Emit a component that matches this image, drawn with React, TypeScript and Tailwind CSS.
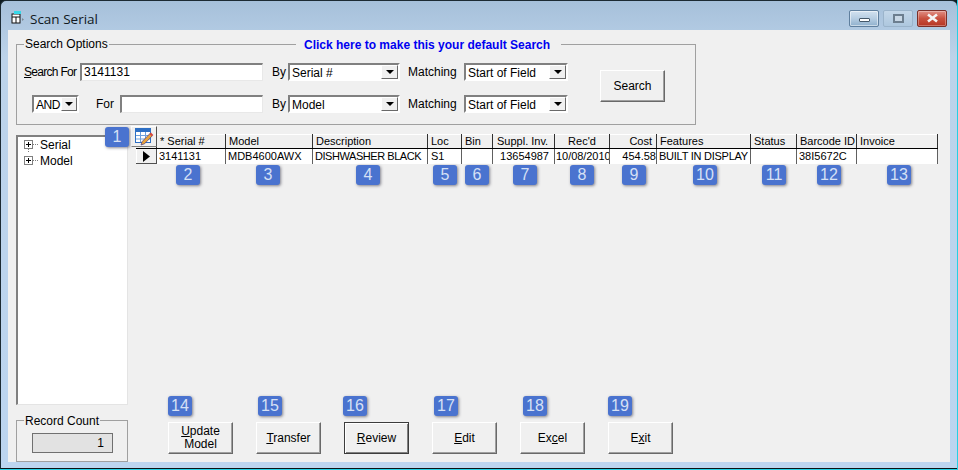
const ui = "[font-family:'Liberation_Sans',Arial,sans-serif]";

function Badge({ n, className }: { n: number; className: string }) {
  return (
    <div className={`absolute z-20 h-5 w-6 rounded-[3px] bg-[#4a73cf] text-center text-[16px] leading-5 text-[#d6e0f5] shadow-[1px_1px_3px_rgba(40,40,60,0.55)] ${className}`}>
      {n}
    </div>
  );
}

function Arrow({ narrow }: { narrow?: boolean }) {
  return (
    <div className={`flex h-full ${narrow ? "w-[16px]" : "w-[17px]"} shrink-0 items-center justify-center border border-t-white border-l-white border-r-[#696969] border-b-[#696969] bg-[#f0f0f0]`}>
      <svg width="8" height="4" viewBox="0 0 8 4"><path d="M0 0h8L4 4z" fill="#000" /></svg>
    </div>
  );
}

function Select({ value, className, narrow }: { value: string; className: string; narrow?: boolean }) {
  return (
    <div className={`flex h-[18px] items-center border-2 border-t-[#808080] border-l-[#808080] border-r-white border-b-white bg-white text-[12px] text-black ${className}`}>
      <span className={`min-w-0 flex-1 whitespace-nowrap pl-[2px] pt-[1px] ${narrow ? "tracking-[-0.5px]" : ""}`}>{value}</span>
      <Arrow narrow={narrow} />
    </div>
  );
}

function Input({ value, className }: { value?: string; className: string }) {
  return (
    <div className={`h-[18px] border-t-2 border-l-2 border-t-[#808080] border-l-[#808080] border-r border-b border-r-[#e8e8e8] border-b-[#e8e8e8] bg-white pl-[2px] text-[12px] leading-[15px] text-black ${className}`}>
      {value}
    </div>
  );
}

function Btn({ children, isDefault, className }: { children: React.ReactNode; isDefault?: boolean; className: string }) {
  return (
    <div className={`flex h-8 w-[65px] shrink-0 flex-col items-center justify-center text-[12px] leading-[13px] text-black ${isDefault ? "border border-[#3c3c3c] shadow-[inset_1px_1px_0_#fff,inset_-1px_-1px_0_#808080]" : "border border-t-white border-l-white border-r-[#696969] border-b-[#696969] shadow-[inset_-1px_-1px_0_#a0a0a0]"} ${className}`}>
      {children}
    </div>
  );
}

const cols = [
  { w: "w-[69px]", head: "* Serial #", val: "3141131", hc: "pl-[3px]", dc: "pl-[2px]" },
  { w: "w-[87px]", head: "Model", val: "MDB4600AWX", hc: "pl-[3px]", dc: "pl-[2px]" },
  { w: "w-[115px]", head: "Description", val: "DISHWASHER BLACK", hc: "pl-[3px]", dc: "pl-[2px] tracking-[-0.45px]" },
  { w: "w-[34px]", head: "Loc", val: "S1", hc: "pl-[3px]", dc: "pl-[3px]" },
  { w: "w-[31px]", head: "Bin", val: "", hc: "pl-[3px]", dc: "" },
  { w: "w-[62px]", head: "Suppl. Inv.", val: "13654987", hc: "pl-[4px]", dc: "pr-[5px] text-right" },
  { w: "w-[55px]", head: "Rec'd", val: "10/08/2010", hc: "text-center", dc: "pl-[1px] tracking-[-0.05px]" },
  { w: "w-[47px]", head: "Cost", val: "454.58", hc: "pr-[4px] text-right", dc: "text-right" },
  { w: "w-[94px]", head: "Features", val: "BUILT IN DISPLAY", hc: "pl-[3px]", dc: "pl-[2px] tracking-[-0.25px]" },
  { w: "w-[46px]", head: "Status", val: "", hc: "pl-[3px]", dc: "" },
  { w: "w-[60px]", head: "Barcode ID", val: "38I5672C", hc: "pl-[3px]", dc: "pl-[2px]" },
  { w: "w-[81px]", head: "Invoice", val: "", hc: "pl-[3px]", dc: "" },
];

const colBadges = [
  { n: 2, c: "left-[45px]" }, { n: 3, c: "left-[125px]" }, { n: 4, c: "left-[225px]" },
  { n: 5, c: "left-[302px]" }, { n: 6, c: "left-[334px]" }, { n: 7, c: "left-[382px]" },
  { n: 8, c: "left-[439px]" }, { n: 9, c: "left-[491px]" }, { n: 10, c: "left-[562px]" },
  { n: 11, c: "left-[631px]" }, { n: 12, c: "left-[686px]" }, { n: 13, c: "left-[756px]" },
];

function TreeItem({ label, last }: { label: string; last?: boolean }) {
  return (
    <div className="relative flex h-4 items-center text-[12px] text-black">
      <svg width="24" height="16" viewBox="0 0 24 16" className="shrink-0">
        <rect x="0.5" y="3.5" width="8" height="8" fill="#fff" stroke="#808080" />
        <path d="M2 7.5h5M4.5 5v5" stroke="#000" />
        <path d="M9 7.5h5" stroke="#808080" strokeDasharray="1 1" />
        {!last && <path d="M4.5 12v4" stroke="#808080" strokeDasharray="1 1" />}
      </svg>
      <span className="-ml-[8px]">{label}</span>
    </div>
  );
}

export default function App() {
  return (
    <div className={`${ui} h-[470px] w-[958px] overflow-hidden border-r border-b border-[#25d0e4] bg-[#0d1a20]`}>
      <div className="flex h-[469px] flex-col rounded-t-[6px] border-t border-l border-b border-[#1c2a33] border-b-[#0b1216] bg-gradient-to-b from-[#a6c0da] via-[#bcd3ea] via-[12%] to-[#bcd5f0]">
        {/* title bar */}
        <div className="flex h-[29px] shrink-0 items-center pl-[10px] pr-[10px]">
          <svg width="16" height="14" viewBox="0 0 16 14" className="mr-[3px] mt-[3px] shrink-0">
            <rect x="1" y="4" width="8" height="9" fill="#fff" stroke="#111" />
            <path d="M1 7h8M5 7v6" stroke="#111" />
            <rect x="3" y="1" width="7" height="3" fill="#36d8e8" />
            <path d="M11 8l2 1.500-2 1.500z" fill="#7d8a96" />
          </svg>
          <span className="mt-[7px] text-[13.5px] text-[#101820] [font-family:'Open_Sans',sans-serif]">Scan Serial</span>
          <div className="ml-auto mt-[5px] flex items-center gap-[4px]">
            <div className="flex h-[17px] w-[30px] items-center justify-center rounded-[2px] border border-[#5f7f9e] bg-gradient-to-b from-[#d3e2f0] via-[#b6cde2] to-[#8fb0cd] shadow-[inset_0_0_0_1px_rgba(255,255,255,0.5)]">
              <div className="mt-[3px] h-[4px] w-[11px] rounded-[1px] border border-[#44586a] bg-white" />
            </div>
            <div className="flex h-[17px] w-[30px] items-center justify-center rounded-[2px] border border-[#9bb4cb] bg-gradient-to-b from-[#c4d7e9] to-[#adc7de]">
              <div className="h-[9px] w-[11px] border-2 border-[#6c7e8f] bg-[#c9d8e6]" />
            </div>
            <div className="flex h-[17px] w-[30px] items-center justify-center rounded-[2px] border border-[#7c2f28] bg-gradient-to-b from-[#e08f85] via-[#c9513f] to-[#b53524] shadow-[inset_0_0_0_1px_rgba(255,255,255,0.3)]">
              <svg width="13" height="10" viewBox="0 0 13 10"><path d="M2 1.500l9 7M11 1.500l-9 7" stroke="#f4f4f4" strokeWidth="2.600" /></svg>
            </div>
          </div>
        </div>

        {/* client area */}
        <div className="ml-[7px] mr-[7px] mb-[6px] flex flex-1 flex-col bg-[#f0f0f0] pl-2 pt-[14px]">
          {/* Search options group */}
          <div className="relative h-[81px] w-[680px] shrink-0 border border-[#a0a0a0] pl-[7px] pt-[18px] text-[12px] text-black">
            <span className="absolute -top-[8px] left-[7px] bg-[#f0f0f0] px-[1px] leading-[14px]">Search Options</span>
            <span className="absolute -top-[7px] left-[279px] bg-[#f0f0f0] pl-[8px] pr-[11px] text-[12px] font-bold leading-[14px] text-[#0000f0]">Click here to make this your default Search</span>

            <div className="flex h-[18px] items-center">
              <span className="w-[56px] shrink-0 whitespace-nowrap tracking-[-0.7px]"><u>S</u>earch For</span>
              <Input value="3141131" className="w-[183px]" />
              <span className="w-[25px] shrink-0 pl-[9px]">By</span>
              <Select value="Serial #" className="w-[112px]" />
              <span className="ml-[8px] w-[56px] shrink-0">Matching</span>
              <Select value="Start of Field" className="w-[104px]" />
            </div>
            <div className="mt-[14px] flex h-[18px] items-center">
              <Select value="AND" narrow className="ml-[8px] w-[47px]" />
              <span className="ml-[17px] w-[24px] shrink-0">For</span>
              <Input className="w-[143px]" />
              <span className="w-[25px] shrink-0 pl-[9px]">By</span>
              <Select value="Model" className="w-[112px]" />
              <span className="ml-[8px] w-[56px] shrink-0">Matching</span>
              <Select value="Start of Field" className="w-[104px]" />
            </div>
            <Btn className="absolute left-[583px] top-[25px]">Search</Btn>
          </div>

          {/* main */}
          <div className="mt-[2px] flex flex-1">
            {/* left */}
            <div className="flex w-[112px] shrink-0 flex-col pt-2">
              <div className="h-[270px] border-t-2 border-l-2 border-t-[#808080] border-l-[#808080] border-r border-b border-r-[#e4e4e4] border-b-[#e4e4e4] bg-white pl-[6px]">
                <TreeItem label="Serial" />
                <TreeItem label="Model" last />
              </div>
              <div className="relative mt-[15px] h-[42px] border border-[#a0a0a0] pl-[15px] pt-[12px]">
                <span className="absolute -top-[7px] left-[7px] bg-[#f0f0f0] px-[1px] text-[12px] leading-[14px] text-black">Record Count</span>
                <div className="h-[20px] w-[81px] border border-[#707070] bg-[#e2e2e2] pr-[8px] text-right text-[12px] leading-[18px] text-black">1</div>
              </div>
            </div>

            {/* right */}
            <div className="relative ml-[3px] flex flex-1 flex-col pt-[7px]">
              <div className="absolute -top-[1px] left-0 z-10 flex h-[21px] w-[26px] items-center justify-center border border-t-white border-l-white border-r-[#505050] border-b-[#808080] bg-[#f0f0f0]">
                <svg width="19" height="18" viewBox="0 0 19 18">
                  <rect x="0.500" y="0.500" width="15" height="14" fill="#fff" stroke="#2d6fc4" />
                  <rect x="1" y="1" width="14" height="3" fill="#2d6fc4" />
                  <path d="M1 7.500h14M1 11h14M5.500 4v10M10.500 4v10" stroke="#6ea0dc" />
                  <path d="M6 17l1.200-3.500L15 5.500l2.300 2.300L9.500 15.800z" fill="#e8a33c" stroke="#4a3a78" strokeWidth="0.700" />
                  <path d="M14.500 6l2.300 2.300L18.300 7 16 4.500z" fill="#d8433c" />
                </svg>
              </div>

              <div className="relative ml-[5px] text-[11px] text-black">
                <div className="flex h-[15px] w-[802px] border-b border-black bg-[#f0f0f0] shadow-[inset_0_1px_0_#fff]">
                  <div className="w-[21px] shrink-0 border-r border-[#303030]" />
                  {cols.map((c) => (
                    <div key={c.head} className={`${c.w} ${c.hc} shrink-0 truncate border-r border-[#303030] leading-[15px]`}>{c.head}</div>
                  ))}
                </div>
                <div className="flex h-[15px] w-[802px] bg-white">
                  <div className="flex w-[21px] shrink-0 items-center justify-center border-r border-b border-[#505050] bg-[#f0f0f0] shadow-[inset_1px_0_0_#fff]">
                    <svg width="7" height="11" viewBox="0 0 7 11"><path d="M0 0l7 5.500L0 11z" fill="#000" /></svg>
                  </div>
                  {cols.map((c) => (
                    <div key={c.head} className={`${c.w} ${c.dc} shrink-0 overflow-hidden whitespace-nowrap border-r border-[#606060] leading-[14px]`}>{c.val}</div>
                  ))}
                </div>
              </div>

              <div className="mb-2 ml-[37px] mt-auto flex gap-[23px]">
                <Btn className=""><span><u>U</u>pdate</span><span>Model</span></Btn>
                <Btn className=""><span><u>T</u>ransfer</span></Btn>
                <Btn className="" isDefault><span><u>R</u>eview</span></Btn>
                <Btn className=""><span><u>E</u>dit</span></Btn>
                <Btn className=""><span>Ex<u>c</u>el</span></Btn>
                <Btn className=""><span>E<u>x</u>it</span></Btn>
              </div>

              <Badge n={1} className="-left-[26px] top-0" />
              {colBadges.map((b) => (
                <Badge key={b.n} n={b.n} className={`top-[38px] ${b.c}`} />
              ))}
              <Badge n={14} className="left-[37px] top-[269px]" />
              <Badge n={15} className="left-[127px] top-[269px]" />
              <Badge n={16} className="left-[212px] top-[269px]" />
              <Badge n={17} className="left-[303px] top-[269px]" />
              <Badge n={18} className="left-[392px] top-[269px]" />
              <Badge n={19} className="left-[477px] top-[269px]" />
            </div>
          </div>
        </div>
      </div>
    </div>
  );
}
